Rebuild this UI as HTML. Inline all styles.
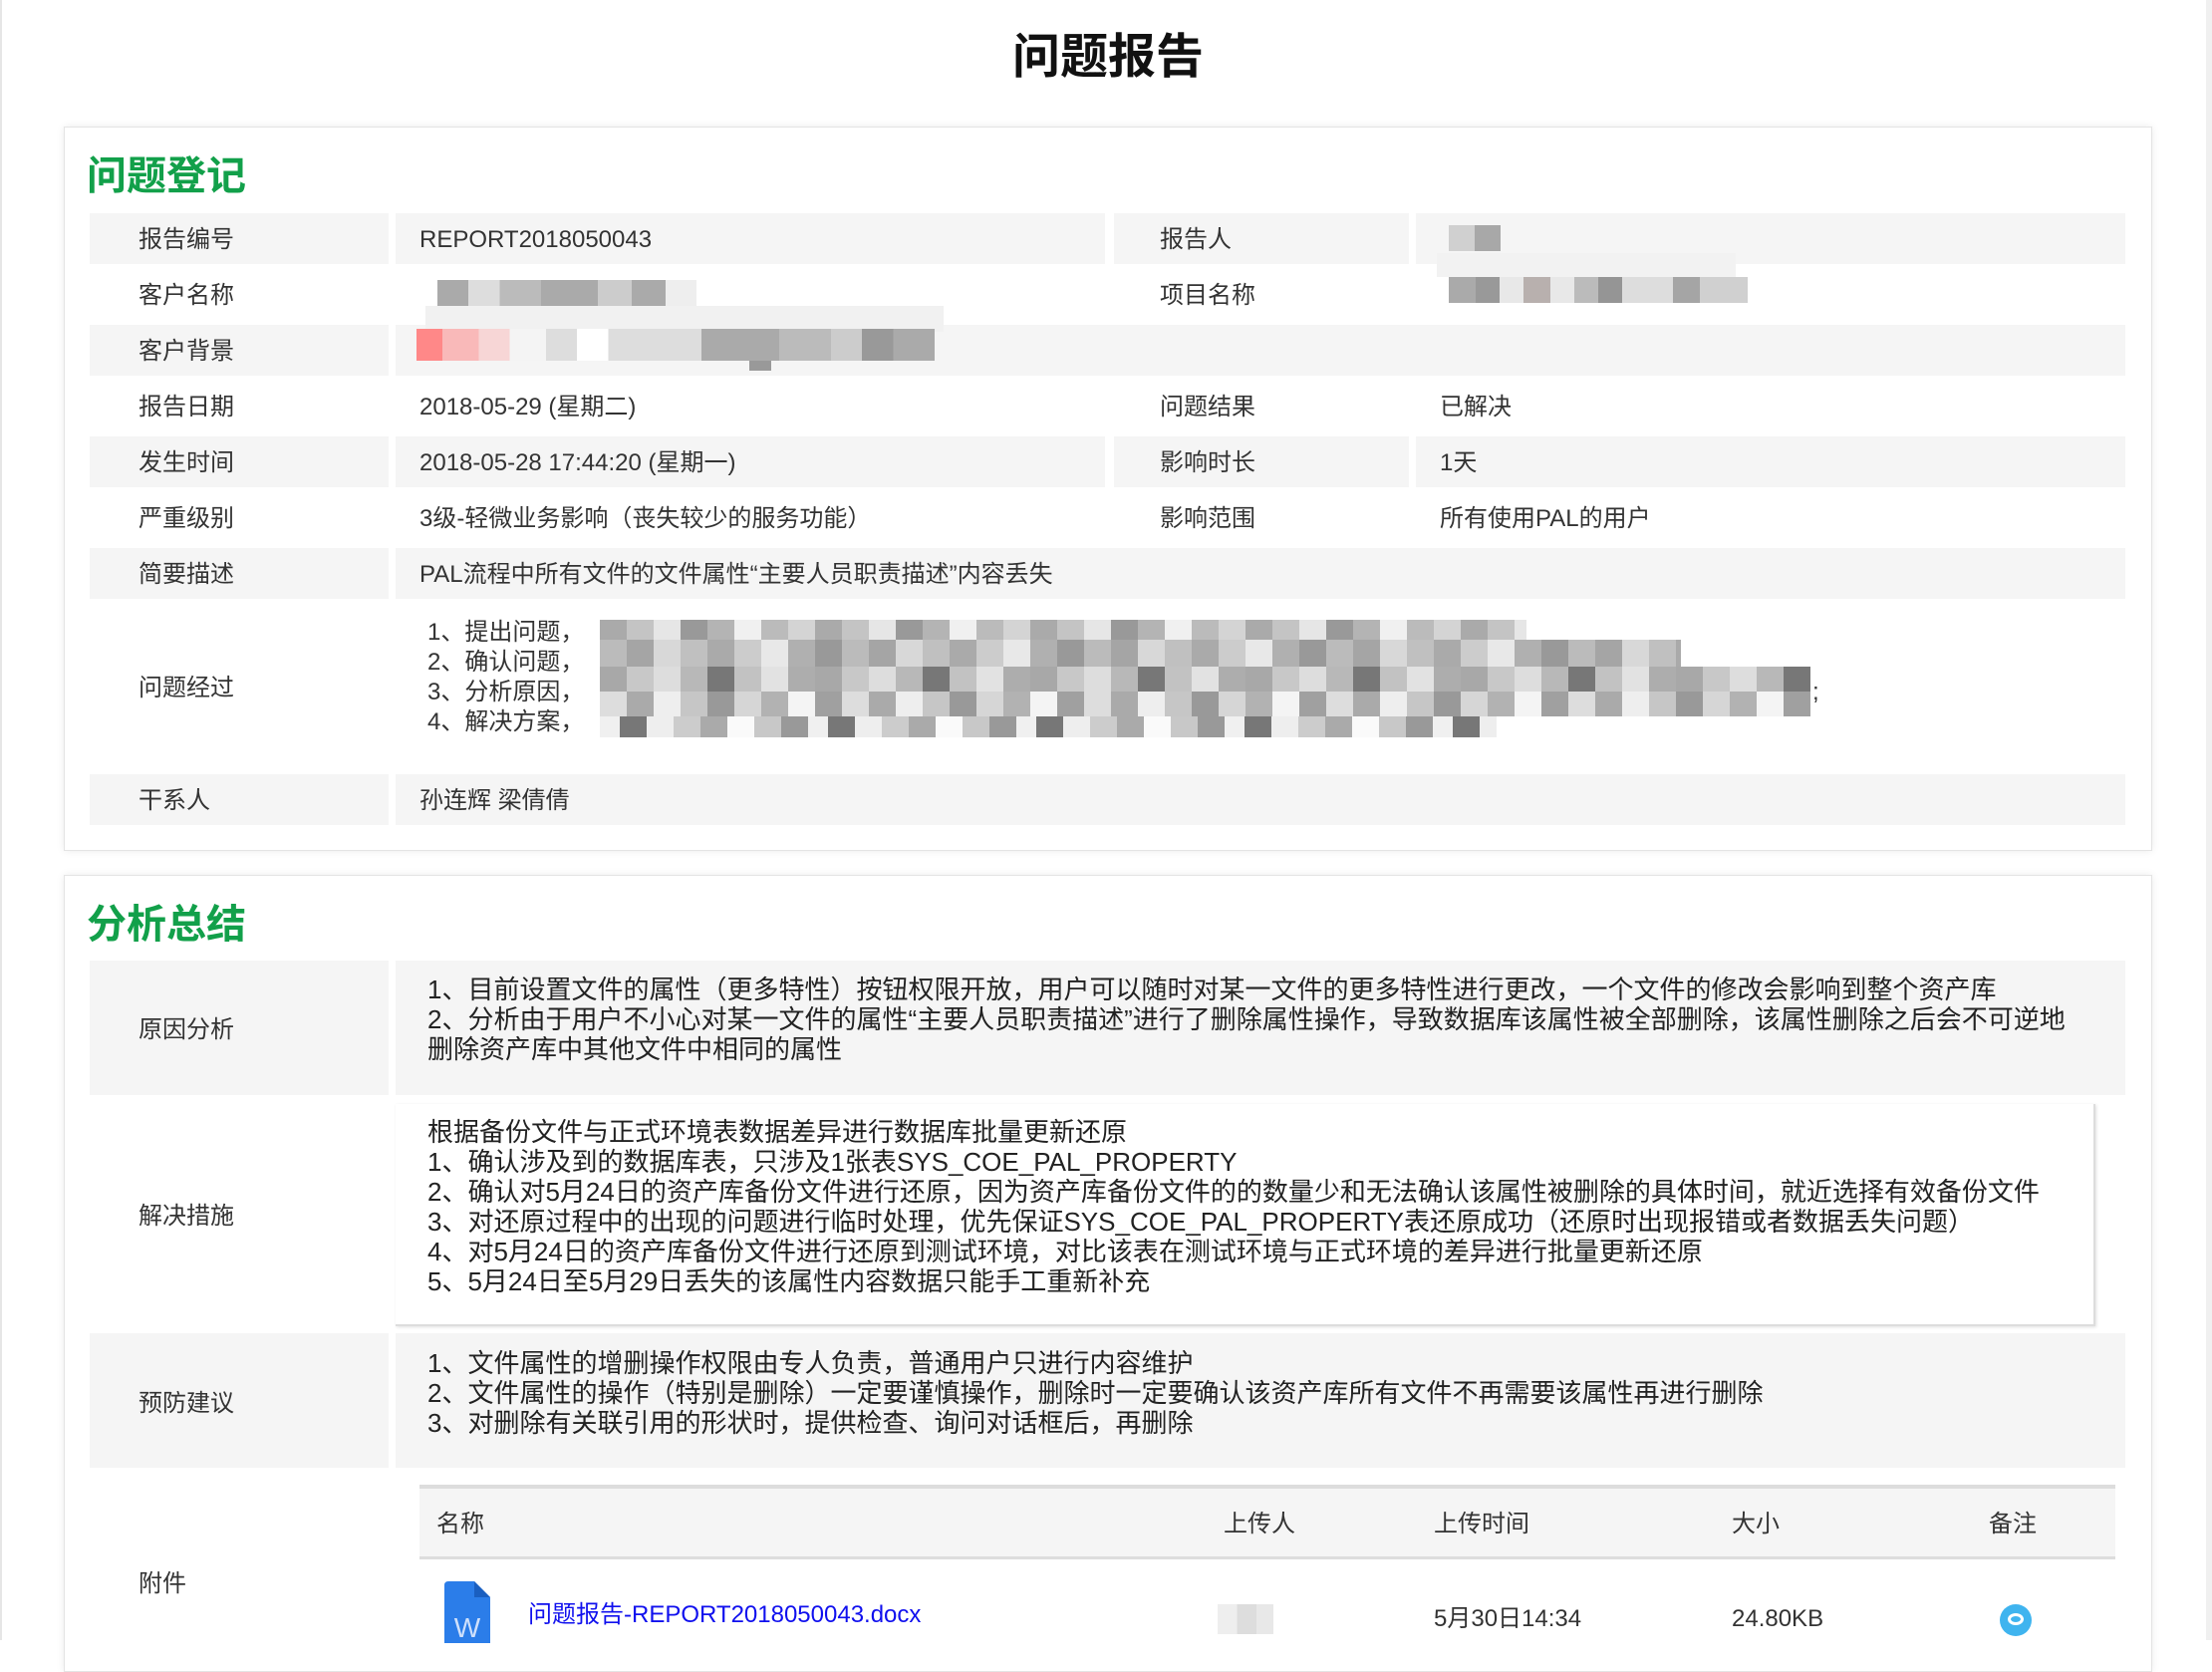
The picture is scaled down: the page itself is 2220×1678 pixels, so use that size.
<!DOCTYPE html>
<html><head><meta charset="utf-8">
<style>
*{margin:0;padding:0;box-sizing:border-box}
body{width:2220px;height:1646px;background:#fff;font-family:"Liberation Sans","Noto Sans CJK SC",sans-serif;color:#333;position:relative;overflow:hidden;border-left:2px solid #e6e6e6}
.abs{position:absolute}
h1{position:absolute;left:0;width:2220px;top:28px;text-align:center;font-size:48px;font-weight:bold;color:#111;line-height:60px}
.card{position:absolute;left:62px;width:2096px;background:#fff;border:1px solid #e4e4e4;box-shadow:0 0 8px rgba(0,0,0,0.08)}
.st{position:absolute;left:22px;font-size:40px;font-weight:bold;color:#12a04a;line-height:50px}
.g{background:#f5f5f5}
.lab{position:absolute;font-size:24px;line-height:30px;color:#333}
.val{position:absolute;font-size:24px;line-height:30px;color:#333;white-space:nowrap}
.mt{font-size:26px;line-height:30px;color:#222;white-space:nowrap}
.blur{position:absolute;height:30px}
</style></head><body>
<div class="abs" style="right:0;top:0;width:6px;height:1646px;background:#f0f0f0"></div>
<h1>问题报告</h1>

<div class="card" style="top:127px;height:727px">
 <div class="st" style="top:24px">问题登记</div>
</div>
<div class="abs g" style="left:88px;top:214px;width:300px;height:51px"></div>
<div class="abs g" style="left:395px;top:214px;width:712px;height:51px"></div>
<div class="abs g" style="left:1116px;top:214px;width:296px;height:51px"></div>
<div class="abs g" style="left:1419px;top:214px;width:712px;height:51px"></div>

<div class="abs g" style="left:88px;top:326px;width:300px;height:51px"></div>
<div class="abs g" style="left:395px;top:326px;width:1736px;height:51px"></div>

<div class="abs g" style="left:88px;top:438px;width:300px;height:51px"></div>
<div class="abs g" style="left:395px;top:438px;width:712px;height:51px"></div>
<div class="abs g" style="left:1116px;top:438px;width:296px;height:51px"></div>
<div class="abs g" style="left:1419px;top:438px;width:712px;height:51px"></div>

<div class="abs g" style="left:88px;top:550px;width:300px;height:51px"></div>
<div class="abs g" style="left:395px;top:550px;width:1736px;height:51px"></div>

<div class="abs g" style="left:88px;top:777px;width:300px;height:51px"></div>
<div class="abs g" style="left:395px;top:777px;width:1736px;height:51px"></div>

<div class="lab" style="left:137px;top:226px">报告编号</div>
<div class="val" style="left:419px;top:226px">REPORT2018050043</div>
<div class="lab" style="left:1162px;top:226px">报告人</div>
<div class="abs" style="left:1452px;top:226px;width:28px;height:26px;background:#d0d0d0"></div>
<div class="abs" style="left:1478px;top:226px;width:26px;height:26px;background:#a8a8a8"></div>
<div class="abs" style="left:1440px;top:254px;width:300px;height:24px;background:#f2f2f2"></div>

<div class="lab" style="left:137px;top:282px">客户名称</div>
<div class="abs" style="left:437px;top:281px;width:260px;height:26px;background:linear-gradient(90deg,#aaa 0 12%,#ddd 12% 24%,#bbb 24% 40%,#aaa 40% 62%,#ccc 62% 75%,#aaa 75% 88%,#eee 88%)"></div>
<div class="abs" style="left:425px;top:307px;width:520px;height:26px;background:#f1f1f1"></div>
<div class="lab" style="left:1162px;top:282px">项目名称</div>
<div class="abs" style="left:1452px;top:278px;width:300px;height:26px;background:linear-gradient(90deg,#aaa 0 9%,#999 9% 17%,#e8e8e8 17% 25%,#b8b0ae 25% 34%,#e8e8e8 34% 42%,#bbb 42% 50%,#959595 50% 58%,#ddd 58% 75%,#a5a5a5 75% 84%,#d0d0d0 84%)"></div>

<div class="lab" style="left:137px;top:338px">客户背景</div>
<div class="abs" style="left:416px;top:330px;width:520px;height:32px;background:linear-gradient(90deg,#f88 0 5%,#f9b9b9 5% 12%,#f7d6d6 12% 18%,#f4f4f4 18% 25%,#ddd 25% 31%,#fff 31% 37%,#ddd 37% 55%,#aaa 55% 70%,#bbb 70% 80%,#ccc 80% 86%,#999 86% 92%,#aaa 92%)"></div>
<div class="abs" style="left:750px;top:362px;width:22px;height:10px;background:#999"></div>

<div class="lab" style="left:137px;top:394px">报告日期</div>
<div class="val" style="left:419px;top:394px">2018-05-29 (星期二)</div>
<div class="lab" style="left:1162px;top:394px">问题结果</div>
<div class="val" style="left:1443px;top:394px">已解决</div>

<div class="lab" style="left:137px;top:450px">发生时间</div>
<div class="val" style="left:419px;top:450px">2018-05-28 17:44:20 (星期一)</div>
<div class="lab" style="left:1162px;top:450px">影响时长</div>
<div class="val" style="left:1443px;top:450px">1天</div>

<div class="lab" style="left:137px;top:506px">严重级别</div>
<div class="val" style="left:419px;top:506px">3级-轻微业务影响（丧失较少的服务功能）</div>
<div class="lab" style="left:1162px;top:506px">影响范围</div>
<div class="val" style="left:1443px;top:506px">所有使用PAL的用户</div>

<div class="lab" style="left:137px;top:562px">简要描述</div>
<div class="val" style="left:419px;top:562px">PAL流程中所有文件的文件属性“主要人员职责描述”内容丢失</div>

<div class="lab" style="left:137px;top:676px">问题经过</div>
<div class="val" style="left:427px;top:620px">1、提出问题，</div>
<div class="val" style="left:427px;top:650px">2、确认问题，</div>
<div class="val" style="left:427px;top:680px">3、分析原因，</div>
<div class="val" style="left:427px;top:710px">4、解决方案，</div>
<div class="blur" style="left:600px;top:622px;width:930px;height:20px;background:repeating-linear-gradient(90deg,#aaa 0 27px,#c4c4c4 27px 54px,#e6e6e6 54px 81px,#999 81px 108px,#b4b4b4 108px 135px,#f0f0f0 135px 162px,#bbb 162px 189px,#d4d4d4 189px 216px)"></div>
<div class="blur" style="left:600px;top:642px;width:1085px;height:27px;background:repeating-linear-gradient(90deg,#bbb 0 27px,#a5a5a5 27px 54px,#d8d8d8 54px 81px,#c0c0c0 81px 108px,#aaa 108px 135px,#ccc 135px 162px,#e8e8e8 162px 189px,#b0b0b0 189px 216px,#999 216px 243px)"></div>
<div class="blur" style="left:600px;top:669px;width:1215px;height:25px;background:repeating-linear-gradient(90deg,#a8a8a8 0 27px,#c8c8c8 27px 54px,#ddd 54px 81px,#b8b8b8 81px 108px,#777 108px 135px,#c2c2c2 135px 162px,#e2e2e2 162px 189px,#adadad 189px 216px)"></div>
<div class="blur" style="left:600px;top:694px;width:1215px;height:25px;background:repeating-linear-gradient(90deg,#ddd 0 27px,#aaa 27px 54px,#eee 54px 81px,#c6c6c6 81px 108px,#999 108px 135px,#d6d6d6 135px 162px,#b2b2b2 162px 189px,#f4f4f4 189px 216px,#a0a0a0 216px 243px)"></div>
<div class="blur" style="left:600px;top:719px;width:900px;height:21px;background:repeating-linear-gradient(90deg,#f0f0f0 0 20px,#777 20px 47px,#eee 47px 74px,#ccc 74px 101px,#aaa 101px 128px,#fafafa 128px 155px,#c8c8c8 155px 182px,#999 182px 209px)"></div>
<div class="val" style="left:1817px;top:680px">;</div>

<div class="lab" style="left:137px;top:789px">干系人</div>
<div class="val" style="left:419px;top:789px">孙连辉 梁倩倩</div>

<div class="card" style="top:878px;height:800px">
 <div class="st" style="top:24px">分析总结</div>
</div>
<div class="abs g" style="left:88px;top:964px;width:300px;height:135px"></div>
<div class="abs g" style="left:395px;top:964px;width:1736px;height:135px"></div>
<div class="lab" style="left:137px;top:1019px">原因分析</div>
<div class="abs mt" style="left:427px;top:978px">1、目前设置文件的属性（更多特性）按钮权限开放，用户可以随时对某一文件的更多特性进行更改，一个文件的修改会影响到整个资产库<br>2、分析由于用户不小心对某一文件的属性“主要人员职责描述”进行了删除属性操作，导致数据库该属性被全部删除，该属性删除之后会不可逆地<br>删除资产库中其他文件中相同的属性</div>

<div class="abs" style="left:395px;top:1108px;width:1706px;height:223px;border-right:2px solid #ddd;border-bottom:2px solid #ddd;box-shadow:1px 1px 3px rgba(0,0,0,0.12)"></div>
<div class="lab" style="left:137px;top:1206px">解决措施</div>
<div class="abs mt" style="left:427px;top:1121px">根据备份文件与正式环境表数据差异进行数据库批量更新还原<br>1、确认涉及到的数据库表，只涉及1张表SYS_COE_PAL_PROPERTY<br>2、确认对5月24日的资产库备份文件进行还原，因为资产库备份文件的的数量少和无法确认该属性被删除的具体时间，就近选择有效备份文件<br>3、对还原过程中的出现的问题进行临时处理，优先保证SYS_COE_PAL_PROPERTY表还原成功（还原时出现报错或者数据丢失问题）<br>4、对5月24日的资产库备份文件进行还原到测试环境，对比该表在测试环境与正式环境的差异进行批量更新还原<br>5、5月24日至5月29日丢失的该属性内容数据只能手工重新补充</div>

<div class="abs g" style="left:88px;top:1338px;width:300px;height:135px"></div>
<div class="abs g" style="left:395px;top:1338px;width:1736px;height:135px"></div>
<div class="lab" style="left:137px;top:1394px">预防建议</div>
<div class="abs mt" style="left:427px;top:1353px">1、文件属性的增删操作权限由专人负责，普通用户只进行内容维护<br>2、文件属性的操作（特别是删除）一定要谨慎操作，删除时一定要确认该资产库所有文件不再需要该属性再进行删除<br>3、对删除有关联引用的形状时，提供检查、询问对话框后，再删除</div>

<div class="lab" style="left:137px;top:1575px">附件</div>
<div class="abs" style="left:419px;top:1490px;width:1702px;height:75px;background:#f5f5f5;border-top:4px solid #ddd;border-bottom:3px solid #ddd"></div>
<div class="lab" style="left:436px;top:1515px">名称</div>
<div class="lab" style="left:1226px;top:1515px">上传人</div>
<div class="lab" style="left:1437px;top:1515px">上传时间</div>
<div class="lab" style="left:1736px;top:1515px">大小</div>
<div class="lab" style="left:1994px;top:1515px">备注</div>

<svg class="abs" style="left:444px;top:1587px" width="46" height="62" viewBox="0 0 46 62">
<path d="M0 4 Q0 0 4 0 H30 L46 16 V62 H0 Z" fill="#2b7de9"/>
<path d="M30 0 V16 H46 Z" fill="#1a5fc0"/>
<text x="23" y="56" font-family="Liberation Sans" font-size="28" fill="#cfe0fb" text-anchor="middle">W</text>
</svg>
<div class="val" style="left:528px;top:1606px;color:#1010ee">问题报告-REPORT2018050043.docx</div>
<div class="abs" style="left:1220px;top:1610px;width:56px;height:30px;background:linear-gradient(90deg,#eee 0 35%,#ddd 35% 70%,#e8e8e8 70%)"></div>
<div class="val" style="left:1437px;top:1610px">5月30日14:34</div>
<div class="val" style="left:1736px;top:1610px">24.80KB</div>
<div class="abs" style="left:2005px;top:1610px;width:32px;height:32px;border-radius:50%;background:#3fb4ef"></div>
<div class="abs" style="left:2013px;top:1619px;width:16px;height:12px;border-radius:50%;border:3px solid #fff"></div>
</body></html>
